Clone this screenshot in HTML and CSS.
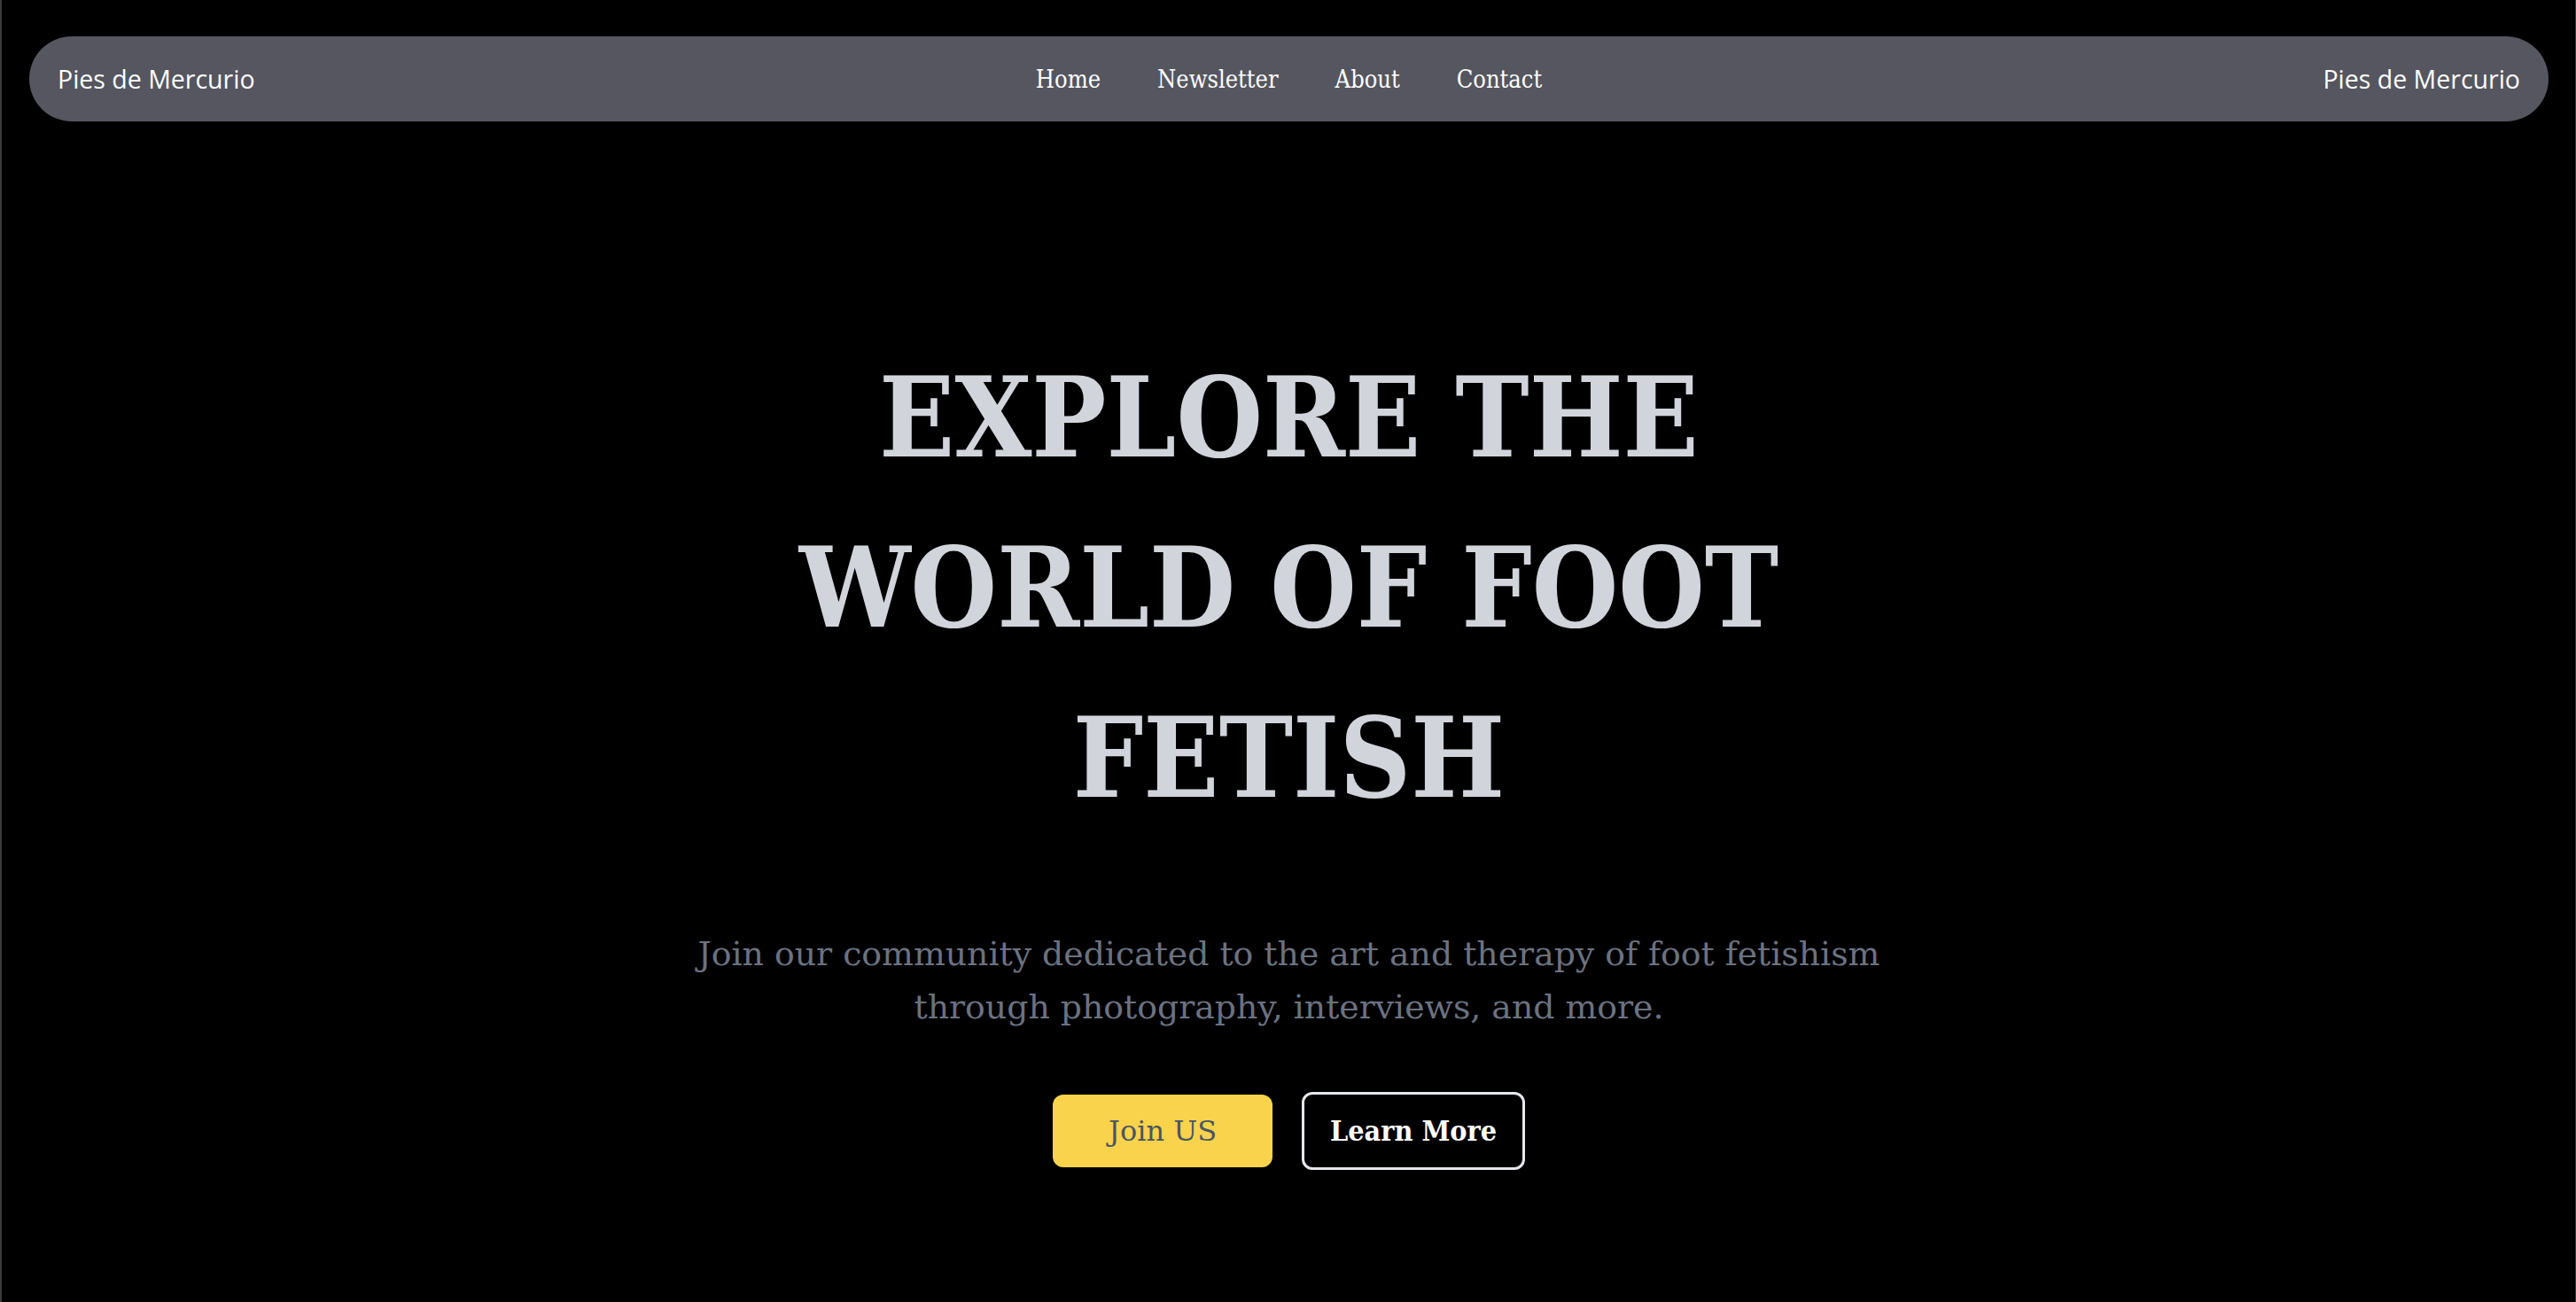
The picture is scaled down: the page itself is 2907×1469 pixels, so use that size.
FILE: index.html
```html
<!DOCTYPE html>
<html lang="en">
<head>
<meta charset="utf-8">
<title>Pies de Mercurio</title>
<link rel="stylesheet" href="styles.css">
</head>
<body>
<div class="page">
  <header class="navbar">
    <a class="brand" href="#">Pies de Mercurio</a>
    <nav class="links">
      <a href="#">Home</a>
      <a href="#">Newsletter</a>
      <a href="#">About</a>
      <a href="#">Contact</a>
    </nav>
    <a class="brand" href="#">Pies de Mercurio</a>
  </header>
  <main class="hero">
    <h1 class="title">EXPLORE THE WORLD OF FOOT FETISH</h1>
    <p class="lead">Join our community dedicated to the art and therapy of foot fetishism through photography, interviews, and more.</p>
    <div class="actions">
      <a class="btn btn-join" href="#">Join US</a>
      <a class="btn btn-learn" href="#">Learn More</a>
    </div>
  </main>
</div>
</body>
</html>
```
FILE: styles.css
```css
html, body {
  margin: 0;
  padding: 0;
  background: #000;
}
.page {
  min-height: 1469px;
  box-sizing: border-box;
  border-left: 2px solid #3a3a3a;
  border-right: 1px solid #3a3a3a;
  padding: 41px 30px 0 31px;
  font-family: "DejaVu Serif", serif;
}
.navbar {
  height: 96px;
  background: #55565f;
  border-radius: 48px;
  display: flex;
  align-items: center;
  justify-content: space-between;
  padding: 0 32px;
  position: relative;
}
.brand {
  font-family: "Open Sans", "Noto Sans", sans-serif;
  font-size: 28.5px;
  color: #fff;
  text-decoration: none;
}
.links {
  display: flex;
  gap: 64px;
}
.links a {
  font-family: "DejaVu Serif Condensed", "DejaVu Serif", serif;
  font-stretch: condensed;
  font-size: 27px;
  color: #fff;
  text-decoration: none;
}
.hero {
  display: flex;
  flex-direction: column;
  align-items: center;
  text-align: center;
  padding-top: 238px;
}
.title {
  margin: 0;
  max-width: 1152px;
  font-family: "DejaVu Serif Condensed", "DejaVu Serif", serif;
  font-stretch: condensed;
  font-size: 124.5px;
  line-height: 192px;
  font-weight: bold;
  color: #d1d5db;
}
.lead {
  margin: 95px 0 0;
  max-width: 1400px;
  font-size: 37.8px;
  line-height: 60px;
  color: #6b7280;
}
.actions {
  display: flex;
  gap: 33px;
  align-items: center;
  margin-top: 66px;
}
.btn {
  font-size: 32px;
  line-height: 48px;
  text-decoration: none;
  border-radius: 12px;
  box-sizing: border-box;
}
.btn-join {
  background: #f8d34b;
  color: #4b5563;
  padding: 17px 63px;
}
.btn-learn {
  font-family: "DejaVu Serif Condensed", "DejaVu Serif", serif;
  font-stretch: condensed;
  color: #fff;
  font-weight: bold;
  border: 3px solid #e5e7eb;
  padding: 17px 29px;
}
```
